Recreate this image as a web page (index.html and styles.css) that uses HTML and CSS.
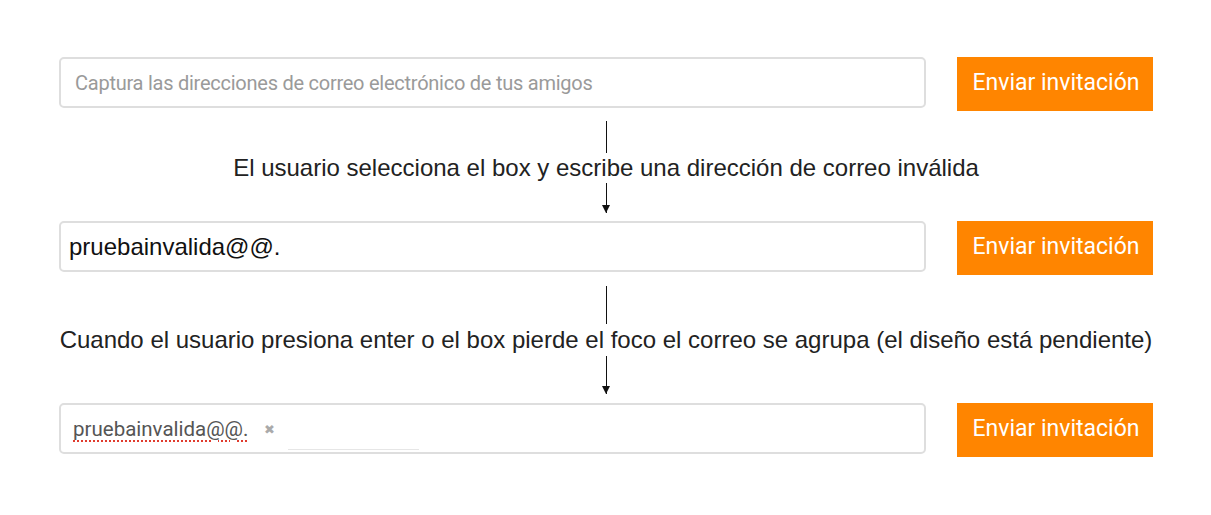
FILE: index.html
```html
<!DOCTYPE html>
<html lang="es">
<head>
    <meta charset="UTF-8">
    <title>Invitar amigos</title>
    <link rel="stylesheet" href="styles.css">
</head>
<body>

<div class="flow">
    <!-- Paso 1: box vacío -->
    <div class="invite-row">
        <div class="email-box">
            <span class="placeholder">Captura las direcciones de correo electrónico de tus amigos</span>
        </div>
        <button class="send-btn">Enviar invitación</button>
    </div>

    <div class="connector connector-a">
        <div class="line"></div>
        <p class="step-text">El usuario selecciona el box y escribe una dirección de correo inválida</p>
        <div class="line arrow"></div>
    </div>

    <!-- Paso 2: texto escrito -->
    <div class="invite-row">
        <div class="email-box">
            <span class="typed">pruebainvalida@@.</span>
        </div>
        <button class="send-btn">Enviar invitación</button>
    </div>

    <div class="connector connector-b">
        <div class="line"></div>
        <p class="step-text">Cuando el usuario presiona enter o el box pierde el foco el correo se agrupa (el diseño está pendiente)</p>
        <div class="line arrow"></div>
    </div>

    <!-- Paso 3: correo agrupado -->
    <div class="invite-row">
        <div class="email-box">
            <span class="chip">
                <span class="chip-text">pruebainvalida@@.</span>
                <span class="chip-remove">&#x2716;</span>
            </span>
            <span class="chip-input"></span>
        </div>
        <button class="send-btn">Enviar invitación</button>
    </div>
</div>

</body>
</html>
```

FILE: styles.css
```css
body {
    margin: 0;
    background-color: #ffffff;
    font-family: 'Liberation Sans', Arial, sans-serif;
    color: #222;
}

.flow {
    width: 1094px;
    padding: 57px 0 0 59px;
}

.invite-row {
    display: flex;
    align-items: flex-start;
    gap: 31px;
}

.email-box {
    flex: 1;
    height: 51px;
    box-sizing: border-box;
    border: 2px solid #dedede;
    border-radius: 5px;
    display: flex;
    align-items: center;
    padding: 0 14px 0 8px;
}

.placeholder {
    font-family: 'Roboto', sans-serif;
    font-size: 20px;
    color: #9a9a9a;
    padding-left: 6px;
    letter-spacing: -0.25px;
}

.typed {
    font-size: 24px;
    color: #111;
}

.send-btn {
    width: 196px;
    height: 54px;
    border: none;
    background-color: #ff8500;
    color: white;
    font-family: 'Roboto', sans-serif;
    font-size: 23px;
    font-weight: 400;
    padding: 0 0 4px 2px;
    cursor: pointer;
}

/* Conector entre pasos */
.connector {
    width: 1094px;
    display: flex;
    flex-direction: column;
    align-items: center;
}

.connector .line {
    width: 1px;
    background-color: #111;
    position: relative;
}

.connector .arrow::after {
    content: "";
    position: absolute;
    bottom: 0;
    left: -4px;
    border-left: 4.5px solid transparent;
    border-right: 4.5px solid transparent;
    border-top: 8px solid #111;
}

.step-text {
    margin: 0;
    font-size: 24px;
    line-height: 30px;
    white-space: nowrap;
}

.connector-a {
    padding: 10px 0 8px;
}

.connector-a .line {
    height: 32px;
}

.connector-a .arrow {
    height: 30px;
}

.connector-b {
    padding: 11px 0 9px;
}

.connector-b .line {
    height: 38px;
}

.connector-b .step-text {
    line-height: 32px;
}

.connector-b .arrow {
    height: 38px;
}

/* Correo agrupado */
.chip {
    display: flex;
    align-items: center;
    padding-left: 4px;
}

.chip-text {
    font-family: 'Roboto', sans-serif;
    font-size: 20.5px;
    color: #555;
    text-decoration: underline dotted #e03b2e;
    text-decoration-thickness: 2px;
    text-underline-offset: 5px;
}

.chip-remove {
    font-size: 13px;
    color: #aaa;
    margin-left: 16px;
    margin-top: 2px;
}

.chip-input {
    align-self: flex-end;
    width: 131px;
    height: 1px;
    background-color: #e6e6e6;
    margin: 0 0 2px 13px;
}
```
